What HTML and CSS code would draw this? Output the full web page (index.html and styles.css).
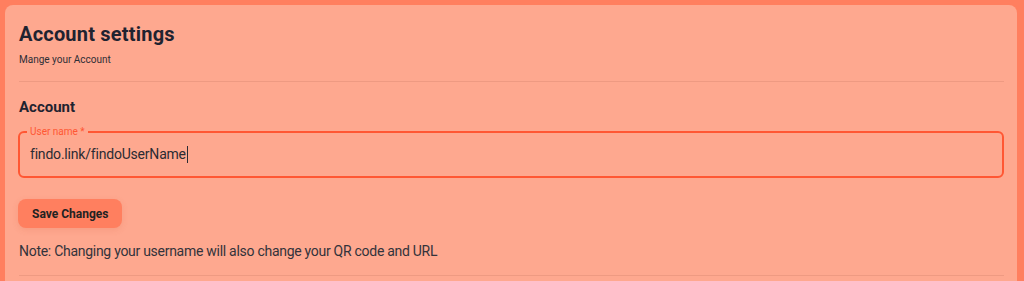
FILE: index.html
```html
<!DOCTYPE html>
<html lang="en">
<head>
<meta charset="utf-8">
<title>Account settings</title>
<link rel="stylesheet" href="styles.css">
</head>
<body>
<main class="card">
  <header class="card-head">
    <h1 class="title">Account settings</h1>
    <p class="subtitle">Mange your Account</p>
  </header>
  <section class="section">
    <h2 class="section-title">Account</h2>
    <fieldset class="field">
      <legend class="field-label">User name *</legend>
      <div class="field-value">findo.link/findoUserName<span class="caret"></span></div>
    </fieldset>
    <button class="btn" type="button">Save Changes</button>
    <p class="note">Note: Changing your username will also change your QR code and URL</p>
  </section>
  <div class="divider"></div>
</main>
</body>
</html>
```
FILE: styles.css
```css
html, body {
  margin: 0;
  padding: 0;
}
body {
  background: #ff7f5f;
  padding: 5px 7px 0 5px;
  height: 281px;
  box-sizing: border-box;
  overflow: hidden;
  font-family: Roboto, "Noto Sans", sans-serif;
  color: #2b2b33;
}
.card {
  background: #fea88f;
  border-radius: 8px;
  padding: 15px 13px 40px 14px;
}
.card-head {
  border-bottom: 1px solid #ee9a82;
  padding-bottom: 14px;
}
.title {
  margin: 0;
  font-size: 20px;
  line-height: 28px;
  font-weight: 700;
  letter-spacing: 0.2px;
  color: #1f2330;
}
.subtitle {
  margin: 5px 0 0;
  font-size: 10px;
  line-height: 14px;
  color: #2e2e36;
}
.section {
  padding-top: 14px;
}
.section-title {
  margin: 0;
  font-size: 15px;
  line-height: 22px;
  font-weight: 700;
  color: #1f2330;
}
.field {
  margin: 9px 0 0 -1px;
  padding: 0 10px;
  border: 2px solid #ff5733;
  border-radius: 6px;
  height: 51px;
  box-sizing: border-box;
}
.field-label {
  font-size: 10px;
  line-height: 10px;
  color: #ff5733;
  padding: 0 3px;
  margin-left: -3px;
}
.field-value {
  font-size: 14px;
  line-height: 20px;
  letter-spacing: -0.2px;
  color: #2b2b33;
  padding-top: 7px;
  display: flex;
  align-items: center;
}
.caret {
  display: inline-block;
  width: 1px;
  height: 17px;
  background: #2b2b33;
  margin-left: 1px;
}
.btn {
  display: block;
  margin: 21px 0 0 -1px;
  height: 29px;
  padding: 0 14px;
  border: none;
  border-radius: 8px;
  background: #ff7f5f;
  font-family: inherit;
  font-size: 12px;
  font-weight: 700;
  color: #222;
  box-shadow: 0 2px 6px rgba(200, 80, 50, 0.15);
}
.note {
  margin: 13px 0 0;
  font-size: 14px;
  line-height: 20px;
  letter-spacing: -0.28px;
  color: #33333b;
}
.divider {
  margin-top: 14px;
  border-top: 1px solid #ee9a82;
}
```
